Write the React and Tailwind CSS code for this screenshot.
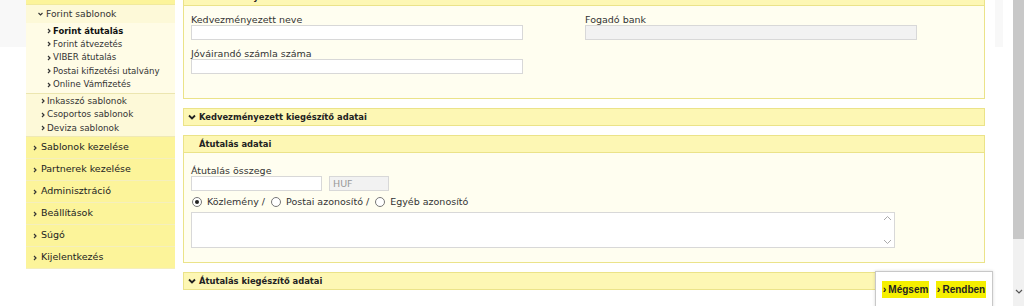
import React from "react";

const font = { fontFamily: '"DejaVu Sans", Verdana, sans-serif' };
const boldFont = { fontFamily: '"DejaVu Sans Condensed", "DejaVu Sans", Tahoma, sans-serif' };

function Chev({ className = "" }) {
  return (
    <svg width="4" height="6" viewBox="0 0 4 6" className={className}>
      <polyline points="1,1 3,3 1,5" fill="none" stroke="#333" strokeWidth="1.2" />
    </svg>
  );
}

function ChevDown() {
  return (
    <svg width="8" height="6" viewBox="0 0 8 6" className="mr-[3px] shrink-0">
      <polyline points="1,1.5 4,4.5 7,1.5" fill="none" stroke="#222" strokeWidth="1.8" />
    </svg>
  );
}

function Radio({ checked }) {
  return (
    <span className="w-[10px] h-[10px] rounded-full border border-[#777] bg-white flex items-center justify-center">
      {checked && <span className="w-[4px] h-[4px] rounded-full bg-[#222]" />}
    </span>
  );
}

function PanelHeader({ title, collapsed }) {
  return (
    <div className="h-[18px] flex items-center bg-[#fdf7b4] border border-[#ebe389] pl-[4px] text-[9.3px] font-bold text-[#222]" style={boldFont}>
      {collapsed ? <ChevDown /> : <div className="w-[11px] min-w-[11px] h-[1px] shrink-0" />}
      <span>{title}</span>
    </div>
  );
}

const subItems = ["Forint átutalás", "Forint átvezetés", "VIBER átutalás", "Postai kifizetési utalvány", "Online Vámfizetés"];
const groups = ["Inkasszó sablonok", "Csoportos sablonok", "Deviza sablonok"];
const mainItems = ["Sablonok kezelése", "Partnerek kezelése", "Adminisztráció", "Beállítások", "Súgó", "Kijelentkezés"];

export default function App() {
  return (
    <div className="w-[1024px] h-[306px] overflow-hidden flex bg-white text-[#333]" style={font}>
      {/* left gutter */}
      <div className="w-[26px] flex flex-col">
        <div className="h-[47px] bg-[#f8f8f8]" />
      </div>

      {/* sidebar */}
      <div className="w-[149px] flex flex-col self-start">
        <div className="h-[5px] bg-[#fcf49a] border-b border-[#f1ea9c]" />
        <div className="h-[18px] flex items-center pl-[12px] bg-[#fdf9d8] text-[9.2px]">
          <svg width="5" height="4" viewBox="0 0 5 4" className="mr-[3px]">
            <polyline points="0.5,1 2.5,3 4.5,1" fill="none" stroke="#333" strokeWidth="1.1" />
          </svg>
          Forint sablonok
        </div>
        <div className="bg-[#fffce6] pt-[1px] pb-[1px]">
          {subItems.map((s, i) => (
            <div key={s} className="h-[13.5px] flex items-center pl-[21px] text-[8.6px]">
              <Chev className="mr-[2px]" />
              {i === 0 ? (
                <span className="text-[9.4px] font-bold text-[#111]" style={boldFont}>{s}</span>
              ) : (
                <span>{s}</span>
              )}
            </div>
          ))}
        </div>
        <div className="bg-[#fdf9d8] border-t border-[#ece6b0] pt-[1px] pb-[1px]">
          {groups.map((g) => (
            <div key={g} className="h-[13.5px] flex items-center pl-[15px] text-[8.8px]">
              <Chev className="mr-[2px]" />
              {g}
            </div>
          ))}
        </div>
        <div className="border-t border-[#efe9b6]">
          {mainItems.map((m) => (
            <div key={m} className="h-[22px] flex items-center pl-[7px] bg-[#fcf49a] border-b border-[#f5efbd] text-[9.5px] text-[#222]">
              <Chev className="mr-[4px]" />
              {m}
            </div>
          ))}
        </div>
      </div>

      {/* main */}
      <div className="w-[802px] ml-[8px] flex flex-col">
        <div className="mt-[-12px]">
          <PanelHeader title="Kedvezményezett adatai" />
          <div className="h-[93px] bg-[#fffef0] border border-t-0 border-[#ebe389] px-[7px] pt-[8px] flex gap-[62px] text-[9.5px]">
            <div className="w-[332px] flex flex-col">
              <div className="h-[11px] leading-[11px]">Kedvezményezett neve</div>
              <div className="h-[15px] bg-white border border-[#d8d8d8]" />
              <div className="h-[11px] leading-[11px] mt-[8px]">Jóváirandó számla száma</div>
              <div className="h-[15px] bg-white border border-[#d8d8d8]" />
            </div>
            <div className="w-[332px] flex flex-col">
              <div className="h-[11px] leading-[11px]">Fogadó bank</div>
              <div className="h-[15px] bg-[#f2f2f2] border border-[#d8d8d8]" />
            </div>
          </div>
        </div>

        <div className="mt-[9px]">
          <PanelHeader title="Kedvezményezett kiegészítő adatai" collapsed />
        </div>

        <div className="mt-[9px]">
          <PanelHeader title="Átutalás adatai" />
          <div className="h-[110px] bg-[#fffef0] border border-t-0 border-[#ebe389] px-[7px] pt-[12px] text-[9.5px]">
            <div className="h-[11px] leading-[11px]">Átutalás összege</div>
            <div className="flex gap-[7px]">
              <div className="w-[131px] h-[15px] bg-white border border-[#d8d8d8]" />
              <div className="w-[60px] h-[15px] bg-[#f2f2f2] border border-[#d8d8d8] text-[#999] px-[3px] leading-[13px]">HUF</div>
            </div>
            <div className="flex items-center h-[20px] mt-[1px] pl-[1px]">
              <Radio checked />
              <span className="ml-[5px] mr-[6px]">Közlemény /</span>
              <Radio />
              <span className="ml-[5px] mr-[6px]">Postai azonosító /</span>
              <Radio />
              <span className="ml-[5px]">Egyéb azonosító</span>
            </div>
            <div className="w-[704px] h-[36px] bg-white border border-[#d8d8d8] flex justify-end pr-[2px]">
              <div className="flex flex-col justify-between py-[2px]">
                <svg width="9" height="6" viewBox="0 0 9 6"><polyline points="1,5 4.5,1.5 8,5" fill="none" stroke="#aaa" strokeWidth="1" /></svg>
                <svg width="9" height="6" viewBox="0 0 9 6"><polyline points="1,1 4.5,4.5 8,1" fill="none" stroke="#aaa" strokeWidth="1" /></svg>
              </div>
            </div>
          </div>
        </div>

        <div className="mt-[9px]">
          <PanelHeader title="Átutalás kiegészítő adatai" collapsed />
        </div>
      </div>

      {/* right gap */}
      <div className="w-[28px] flex flex-col relative">
        <div className="h-[47px] mx-[10px] bg-[#f8f8f8]" />
      </div>

      {/* scrollbar */}
      <div className="w-[11px] flex flex-col">
        <div className="h-[239px] bg-[#c8c8c8]" />
        <div className="flex-1 bg-[#f1f1f1] flex items-end justify-center pb-[12px]">
          <svg width="8" height="5" viewBox="0 0 8 5"><polyline points="1,1 4,4 7,1" fill="none" stroke="#555" strokeWidth="1.2" /></svg>
        </div>
      </div>

      {/* floating buttons */}
      <div className="absolute left-[875px] top-[271px] w-[118px] h-[40px] bg-white border border-[#c8c8c8] shadow-[0_0_3px_rgba(0,0,0,0.15)] flex gap-[7px] pl-[6px] pt-[9px]">
        <button className="h-[17px] w-[47px] bg-[#f5ef00] flex items-center justify-center text-[10px] font-bold text-[#222]" style={{ fontFamily: '"Liberation Sans", Arial, sans-serif' }}>
          <span className="mr-[2px] text-[11px]">›</span>Mégsem
        </button>
        <button className="h-[17px] w-[50px] bg-[#f5ef00] flex items-center justify-center text-[10px] font-bold text-[#222]" style={{ fontFamily: '"Liberation Sans", Arial, sans-serif' }}>
          <span className="mr-[2px] text-[11px]">›</span>Rendben
        </button>
      </div>
    </div>
  );
}
